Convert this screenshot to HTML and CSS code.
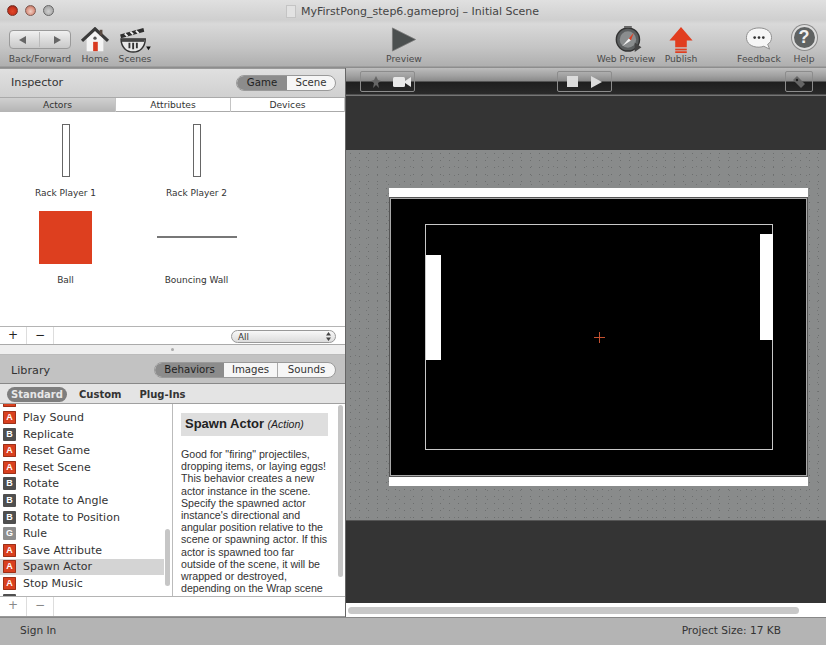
FILE: index.html
```html
<!DOCTYPE html>
<html lang="en">
<head>
<meta charset="utf-8">
<title>MyFirstPong_step6.gameproj – Initial Scene</title>
<link rel="stylesheet" href="styles.css">
</head>
<body>
<div class="window">
  <header class="chrome">
    <div class="titlebar">
      <div class="lights">
        <span class="light red"></span><span class="light amber"></span><span class="light off"></span>
      </div>
      <div class="title"><span class="docicon"></span><span>MyFirstPong_step6.gameproj – Initial Scene</span></div>
    </div>
    <div class="toolbar">
      <div class="tools tools-left">
        <div class="tool tool-nav">
          <div class="navbox">
            <svg width="12" height="10" viewBox="0 0 12 10"><path d="M10 1 L3 5 L10 9 Z" fill="#666"/></svg>
            <span class="navsep"></span>
            <svg width="12" height="10" viewBox="0 0 12 10"><path d="M2 1 L9 5 L2 9 Z" fill="#666"/></svg>
          </div>
          <span class="toollabel">Back/Forward</span>
        </div>
        <div class="tool tool-home">
          <svg class="toolicon" width="30" height="26" viewBox="0 0 30 28">
            <path d="M6 12 L15 4 L24 12 V26 H6 Z" fill="#f4f4f4"/>
            <path d="M1 15 L15 2 L29 15" fill="none" stroke="#3a3a3a" stroke-width="3.4"/>
            <rect x="20" y="3" width="3" height="6" fill="#5a4a40"/>
            <rect x="13" y="16" width="5" height="10" fill="#d83a20"/>
            <circle cx="15" cy="12" r="1.8" fill="#555"/>
          </svg>
          <span class="toollabel">Home</span>
        </div>
        <div class="tool tool-scenes">
          <svg class="toolicon" width="34" height="26" viewBox="0 0 34 28">
            <path d="M1 8 L26 1 L27 5 L2 12 Z" fill="#2e2e2e"/>
            <path d="M6 7 L9 10 M12 5 L15 8 M18 4 L21 7" stroke="#eee" stroke-width="2"/>
            <path d="M2 13 H28 C28 22 22 27 15 27 C8 27 2 22 2 13 Z" fill="#e8e8e8" stroke="#333" stroke-width="1.6"/>
            <path d="M3 13 H27 V16 H3 Z" fill="#444"/>
            <path d="M11 17 V23 M15 17 V24 M19 17 V23" stroke="#333" stroke-width="2"/>
            <path d="M29 21 H34 L31.5 25 Z" fill="#111"/>
          </svg>
          <span class="toollabel">Scenes</span>
        </div>
      </div>
      <div class="tool tool-preview">
        <svg class="toolicon" width="26" height="27" viewBox="0 0 26 28">
          <path d="M1 2 L25 14 L1 26 Z" fill="#4b4f4f" stroke="#777" stroke-width="0.8"/>
        </svg>
        <span class="toollabel">Preview</span>
      </div>
      <div class="tools tools-right">
        <div class="tool tool-web">
          <svg class="toolicon" width="32" height="27" viewBox="0 0 32 28">
            <circle cx="18" cy="14" r="12" fill="#5c5f60" stroke="#333" stroke-width="1.5"/>
            <circle cx="18" cy="14" r="8.5" fill="#8a8d8e"/>
            <path d="M24 7 L19 13 L21 15 Z" fill="#e03c20"/>
            <path d="M12 21 L19 13 L21 15 Z" fill="#f4f4f4"/>
            <path d="M25 17 L32 22 L25 27 Z" fill="#444"/>
            <rect x="14" y="0" width="8" height="2" fill="#666"/>
          </svg>
          <span class="toollabel">Web Preview</span>
        </div>
        <div class="tool tool-publish">
          <svg class="toolicon" width="26" height="27" viewBox="0 0 26 28">
            <path d="M13 1 L25 15 H19 V22 H7 V15 H1 Z" fill="#e13d1f"/>
            <rect x="7" y="23.5" width="12" height="1.8" fill="#e13d1f"/>
            <rect x="7" y="26.2" width="12" height="1.8" fill="#e13d1f"/>
          </svg>
          <span class="toollabel">Publish</span>
        </div>
        <div class="tool tool-feedback">
          <svg class="toolicon" width="30" height="27" viewBox="0 0 30 28">
            <path d="M15 2 C23 2 28 6 28 12 C28 15 26.500 17.500 24 19 L26 24 L20 21 C18 21.600 16.500 22 15 22 C7 22 2 18 2 12 C2 6 7 2 15 2 Z" fill="#f6f6f6" stroke="#8d8d8d"/>
            <circle cx="10.500" cy="12" r="1.400" fill="#333"/><circle cx="15" cy="12" r="1.400" fill="#333"/><circle cx="19.500" cy="12" r="1.400" fill="#333"/>
          </svg>
          <span class="toollabel">Feedback</span>
        </div>
        <div class="tool tool-help">
          <div class="helpicon">?</div>
          <span class="toollabel">Help</span>
        </div>
      </div>
    </div>
  </header>

  <main class="workspace">
    <aside class="sidebar">
      <section class="inspector">
        <div class="panelhead">
          <span class="paneltitle">Inspector</span>
          <div class="segments seg-inspector">
            <span class="seg seg-on seg-game">Game</span><span class="seg seg-scene">Scene</span>
          </div>
        </div>
        <div class="tabs">
          <span class="tab tab-on">Actors</span><span class="tab">Attributes</span><span class="tab">Devices</span>
        </div>
        <div class="actors">
          <div class="actor"><div class="thumb"><span class="rack"></span></div><span class="actorname">Rack Player 1</span></div>
          <div class="actor"><div class="thumb"><span class="rack"></span></div><span class="actorname">Rack Player 2</span></div>
          <div class="actor"><div class="thumb"><span class="ball"></span></div><span class="actorname">Ball</span></div>
          <div class="actor"><div class="thumb"><span class="wall"></span></div><span class="actorname">Bouncing Wall</span></div>
        </div>
        <div class="panelfoot">
          <span class="footbtn">+</span><span class="footbtn">−</span>
          <div class="selectpill"><span>All</span><svg width="7" height="11" viewBox="0 0 7 11"><path d="M3.500 1 L6 4.500 H1 Z M3.500 10 L6 6.500 H1 Z" fill="#444"/></svg></div>
        </div>
      </section>
      <div class="splitter"><span class="grip"></span></div>
      <section class="library">
        <div class="panelhead libhead">
          <span class="paneltitle">Library</span>
          <div class="segments seg-library">
            <span class="seg seg-on seg-beh">Behaviors</span><span class="seg seg-img">Images</span><span class="seg seg-snd">Sounds</span>
          </div>
        </div>
        <div class="subtabs">
          <span class="subtab subtab-on">Standard</span><span class="subtab sub-custom">Custom</span><span class="subtab sub-plug">Plug-Ins</span>
        </div>
        <div class="libbody">
          <div class="listwrap">
            <ul class="behaviors">
              <li><span class="badge a"></span></li>
              <li><span class="badge a">A</span>Play Sound</li>
              <li><span class="badge b">B</span>Replicate</li>
              <li><span class="badge a">A</span>Reset Game</li>
              <li><span class="badge a">A</span>Reset Scene</li>
              <li><span class="badge b">B</span>Rotate</li>
              <li><span class="badge b">B</span>Rotate to Angle</li>
              <li><span class="badge b">B</span>Rotate to Position</li>
              <li><span class="badge g">G</span>Rule</li>
              <li><span class="badge a">A</span>Save Attribute</li>
              <li class="selected"><span class="badge a">A</span>Spawn Actor</li>
              <li><span class="badge a">A</span>Stop Music</li>
              <li><span class="badge b"></span></li>
            </ul>
            <div class="vscroll list-scroll"><span class="thumb-v list-thumb"></span></div>
          </div>
          <div class="docs">
            <div class="docscroll">
              <h2 class="doctitle">Spawn Actor <em>(Action)</em></h2>
              <p class="doctext">Good for "firing" projectiles,<br>dropping items, or laying eggs!<br>This behavior creates a new<br>actor instance in the scene.<br>Specify the spawned actor<br>instance's directional and<br>angular position relative to the<br>scene or spawning actor. If this<br>actor is spawned too far<br>outside of the scene, it will be<br>wrapped or destroyed,<br>depending on the Wrap scene</p>
            </div>
            <div class="vscroll doc-scroll"><span class="thumb-v doc-thumb"></span></div>
          </div>
        </div>
        <div class="panelfoot libfoot">
          <span class="footbtn dim">+</span><span class="footbtn dim">−</span>
        </div>
      </section>
    </aside>

    <section class="scene">
      <div class="scenebar">
        <div class="groupbtn grp-camera">
          <svg width="12" height="14" viewBox="0 0 12 14"><path d="M6 1 L8 5 L11 6 L8 8 L9 13 L6 10 L3 13 L4 8 L1 6 L4 5 Z" fill="#666"/></svg>
          <svg width="18" height="12" viewBox="0 0 18 12"><rect x="0" y="1" width="12" height="10" rx="1.500" fill="#e8e8e8"/><path d="M12 5 L18 1 V11 L12 7 Z" fill="#e8e8e8"/></svg>
        </div>
        <div class="groupbtn grp-play">
          <svg width="11" height="11" viewBox="0 0 11 11"><rect width="11" height="11" fill="#dcdcdc"/></svg>
          <svg width="12" height="12" viewBox="0 0 12 12"><path d="M1 0 L12 6 L1 12 Z" fill="#dcdcdc"/></svg>
        </div>
        <div class="groupbtn grp-tag">
          <svg width="14" height="14" viewBox="0 0 14 14"><path d="M1 5 L5 1 L13 9 L9 13 Z" fill="#666"/><circle cx="5" cy="5" r="1.200" fill="#222"/></svg>
        </div>
      </div>
      <div class="sceneviewport">
        <div class="offstage offstage-top"></div>
        <div class="stagearea">
          <div class="stage">
            <div class="stagestrip"></div>
            <div class="playfield">
              <div class="walls"></div>
              <span class="paddle paddle-left"></span>
              <span class="paddle paddle-right"></span>
              <span class="crosshair"></span>
            </div>
            <div class="stagestrip"></div>
          </div>
        </div>
        <div class="offstage offstage-bottom"></div>
      </div>
      <div class="hscroll"><span class="thumb-h"></span></div>
    </section>
  </main>

  <footer class="statusbar">
    <span class="signin">Sign In</span>
    <span class="projectsize">Project Size: 17 KB</span>
  </footer>
</div>
</body>
</html>
```
FILE: styles.css
```css
* { box-sizing: border-box; }
html, body { margin: 0; padding: 0; }
body { width: 826px; height: 645px; overflow: hidden; font-family: "DejaVu Sans", sans-serif; color: #333; }
.window { width: 826px; height: 645px; display: flex; flex-direction: column; background: #b5b5b5; }

/* chrome */
.chrome { height: 68px; flex: none; background: linear-gradient(#e0e0e0 0, #cfcfcf 20px, #d9d9d9 24px, #c4c4c4 48px, #afafaf 66px, #8d8d8d 67px); }
.titlebar { height: 21px; display: flex; align-items: center; position: relative; }
.lights { display: flex; gap: 7px; padding-left: 7px; }
.light { width: 11px; height: 11px; border-radius: 50%; border: 1px solid #777; }
.red { background: radial-gradient(circle at 50% 60%, #e2482a 0, #c8321c 55%, #6b1a10 100%); border-color: #7a3328; }
.amber { background: radial-gradient(circle at 50% 60%, #f0cfc4 0, #d98f7d 60%, #8c5a50 100%); border-color: #805a50; }
.off { background: radial-gradient(circle at 50% 60%, #cfcfcf 0, #a8a8a8 70%); border-color: #666; }
.title { position: absolute; left: 286px; top: 1px; height: 20px; display: flex; align-items: center; gap: 5px; font-size: 11px; color: #444; white-space: nowrap; }
.docicon { width: 10px; height: 13px; background: #e2e2e2; border: 1px solid #c4c4c4; }

.toolbar { height: 47px; display: grid; grid-template-columns: 370px 68px 1fr; align-items: start; padding-top: 4px; }
.tools { display: flex; align-items: flex-start; }
.tool { display: flex; flex-direction: column; align-items: center; height: 39px; justify-content: flex-end; }
.tools-right { justify-content: flex-end; padding-right: 10px; }
.toollabel { font-size: 9.2px; line-height: 11px; color: #4a4a4a; white-space: nowrap; }
.toolicon { display: block; margin-bottom: 0; }

.tool-nav { width: 66px; margin-left: 7px; }
.navbox { width: 62px; height: 19px; margin-bottom: 4px; border: 1px solid #9a9a9a; border-radius: 4px; background: linear-gradient(#f0f0f0, #c9c9c9); display: flex; align-items: center; justify-content: space-around; }
.navsep { width: 1px; height: 15px; background: #bbb; }
.tool-home { width: 32px; margin-left: 6px; }
.tool-scenes { width: 36px; margin-left: 6px; }
.tool-preview { width: 68px; }
.tool-web { width: 60px; }
.tool-publish { width: 34px; margin-left: 8px; }
.tool-feedback { width: 46px; margin-left: 38px; }
.tool-help { width: 24px; margin-left: 10px; }
.helpicon { width: 25px; height: 25px; margin-bottom: 3px; border-radius: 50%; background: #5f6262; border: 2px solid #ddd; box-shadow: 0 0 0 1px #8b8b8b; color: #f0f0f0; font: bold 18px/21px "Liberation Sans", sans-serif; text-align: center; }

/* main split */
.workspace { flex: 1; min-height: 0; display: flex; }
.sidebar { width: 346px; flex: none; display: flex; flex-direction: column; background: #fff; border-right: 1px solid #666; }

.panelhead { height: 29px; display: flex; align-items: center; justify-content: space-between; padding: 0 9px 1px 11px; background: linear-gradient(#e0e0e0, #d0d0d0); border-top: 1px solid #999; }
.paneltitle { font-size: 11.2px; color: #333; }
.segments { display: flex; height: 16px; border: 1px solid #9a9a9a; border-radius: 8px; overflow: hidden; font-size: 10.2px; line-height: 14px; text-align: center; color: #333; background: #f6f6f6; }
.seg-on { background: #8c8c8c; color: #1f1f1f; }
.seg-game { width: 50px; }
.seg-scene { width: 48px; }
.seg-beh { width: 69px; }
.seg-img { width: 54px; border-right: 1px solid #aaa; }
.seg-snd { width: 57px; }

.tabs { height: 15px; display: grid; grid-template-columns: 116px 115px 114px; background: #fff; border-top: 1px solid #aaa; border-bottom: 1px solid #aaa; font-size: 9.2px; line-height: 14px; text-align: center; color: #333; }
.tab { border-right: 1px solid #c4c4c4; }
.tab-on { background: linear-gradient(#d0d0d0, #b4b4b4); }

.actors { height: 214px; display: grid; grid-template-columns: 131px 131px; grid-auto-rows: 87px; padding-top: 11px; background: #fff; }
.actor { display: flex; flex-direction: column; align-items: center; }
.thumb { height: 54px; width: 100%; display: flex; align-items: center; justify-content: center; }
.rack { width: 8px; height: 53px; background: #fff; border: 1px solid #666; }
.ball { width: 53px; height: 53px; background: #dd3f1f; }
.wall { width: 80px; height: 2px; background: #777; }
.actorname { margin-top: 10px; font-size: 9px; line-height: 12px; color: #333; white-space: nowrap; }

.panelfoot { height: 19px; display: flex; align-items: stretch; background: #fff; border-top: 1px solid #b4b4b4; border-bottom: 1px solid #aaa; }
.footbtn { width: 27px; border-right: 1px solid #ddd; font-size: 12px; line-height: 16px; text-align: center; color: #222; }
.dim { color: #888; }
.selectpill { width: 105px; height: 13px; margin: 3px 0 0 177px; padding: 0 3px 0 6px; border: 1px solid #999; border-radius: 7px; background: linear-gradient(#f8f8f8, #dcdcdc); display: flex; align-items: center; justify-content: space-between; font-size: 8.8px; color: #333; }

.splitter { height: 9px; flex: none; background: #eee; display: flex; justify-content: center; align-items: center; }
.grip { width: 3px; height: 3px; background: #aaa; border-radius: 50%; }

.libhead { height: 30px; padding-top: 3px; background: #c2c2c2; border-top: 1px solid #bbb; border-bottom: 1px solid #888; }
.subtabs { height: 20px; display: flex; align-items: center; padding: 1px 0 0 7px; background: #e4e4e4; border-bottom: 1px solid #a0a0a0; font-size: 10px; font-weight: bold; color: #333; }
.subtab-on { width: 60px; height: 15px; line-height: 15px; border-radius: 8px; text-align: center; background: #7e7e7e; color: #e8e8e8; }
.sub-custom { margin-left: 12px; }
.sub-plug { margin-left: 18px; }

.libbody { height: 192px; display: flex; overflow: hidden; background: #fff; }
.listwrap { width: 173px; flex: none; display: flex; border-right: 1px solid #bbb; overflow: hidden; }
.behaviors { list-style: none; margin: -11.4px 0 0; padding: 0; width: 164px; flex: none; }
.behaviors li { height: 16.6px; display: flex; align-items: center; gap: 7px; padding-left: 3px; font-size: 11px; color: #333; white-space: nowrap; }
.behaviors .selected { background: #d4d4d4; }
.badge { width: 13px; height: 13px; flex: none; border-radius: 1px; color: #fff; font: bold 9px/13px "Liberation Sans", sans-serif; text-align: center; }
.badge.a { background: #d9401f; box-shadow: inset 0 0 0 1px #9c3018; }
.badge.b { background: #4f4f4f; }
.badge.g { background: #8e8e8e; }

.vscroll { width: 8px; flex: none; position: relative; background: #fff; }
.thumb-v { position: absolute; left: 1px; width: 5px; background: #c6c6c6; border-radius: 3px; }
.list-thumb { top: 125px; height: 57px; }
.doc-scroll { margin-left: auto; }
.doc-thumb { top: 1px; height: 172px; }

.docs { flex: 1; display: flex; min-width: 0; overflow: hidden; }
.docscroll { width: 164px; padding: 9px 0 0 8px; }
.doctitle { width: 147px; height: 23px; margin: 0; padding-left: 4px; background: #dedede; font: bold 13px/22px "Liberation Sans", sans-serif; color: #222; white-space: nowrap; }
.doctitle em { font-size: 10.5px; font-weight: normal; }
.doctext { margin: 12px 0 0; font: 10.65px/12.2px "Liberation Sans", sans-serif; color: #333; white-space: nowrap; }

.libfoot { height: 21px; flex: none; border-bottom: 1px solid #999; }

/* scene */
.scene { flex: 1; min-width: 0; display: flex; flex-direction: column; background: #333; }
.scenebar { height: 28px; flex: none; position: relative; display: flex; align-items: flex-start; padding: 3px 13px 0 14px; background: linear-gradient(#bdbdbd 0, #a0a0a0 8px, #8a8a8a 13px, #1f1f1f 14px, #2a2a2a 26px, #777 27px); }
.groupbtn { height: 21px; border: 1px solid #8c8c8c; border-radius: 2px; display: flex; align-items: center; justify-content: space-between; }
.grp-camera { width: 55px; padding: 0 3px 0 9px; }
.grp-play { width: 55px; margin-left: 142px; padding: 0 9px 0 9px; }
.grp-tag { width: 28px; margin-left: auto; justify-content: center; }

.sceneviewport { flex: 1; min-height: 0; display: flex; flex-direction: column; }
.offstage { background: #343434; flex: none; }
.offstage-top { height: 54px; }
.offstage-bottom { height: 83px; border-top: 1px solid #555; }
.stagearea { height: 370px; flex: none; padding: 38px 0 0 43px; background-color: #898b8b; background-image: radial-gradient(circle, #6c6e6e 0.6px, transparent 0.9px), radial-gradient(circle, #727474 0.6px, transparent 0.9px); background-size: 9px 7px, 11px 9px; background-position: 0 0, 4px 3px; }
.stage { width: 419px; height: 298px; background: #fff; display: flex; flex-direction: column; }
.stagestrip { height: 9px; flex: none; background: #fff; }
.playfield { flex: 1; position: relative; background: #000; padding: 26px 0 0 35px; border: 1px solid #555; box-shadow: inset 0 0 0 1px #a8a8a8; }
.walls { width: 348px; height: 226px; border: 1px solid #c8c8c8; }
.paddle { position: absolute; background: #fff; }
.paddle-left { left: 36px; top: 57px; width: 15px; height: 105px; }
.paddle-right { left: 370px; top: 36px; width: 13px; height: 106px; }
.crosshair { position: absolute; left: 204px; top: 134px; width: 11px; height: 11px; background: linear-gradient(#c4502f, #c4502f) center/11px 1px no-repeat, linear-gradient(#c4502f, #c4502f) center/1px 11px no-repeat; }

.hscroll { height: 14px; flex: none; padding: 4px 0 0 2px; background: #fff; }
.thumb-h { display: block; width: 451px; height: 7px; border-radius: 4px; background: #c8c8c8; }

/* status */
.statusbar { height: 28px; flex: none; display: flex; align-items: center; justify-content: space-between; padding: 0 45px 3px 20px; background: #b4b4b4; border-top: 1px solid #888; font-size: 10.6px; color: #333; }
```
